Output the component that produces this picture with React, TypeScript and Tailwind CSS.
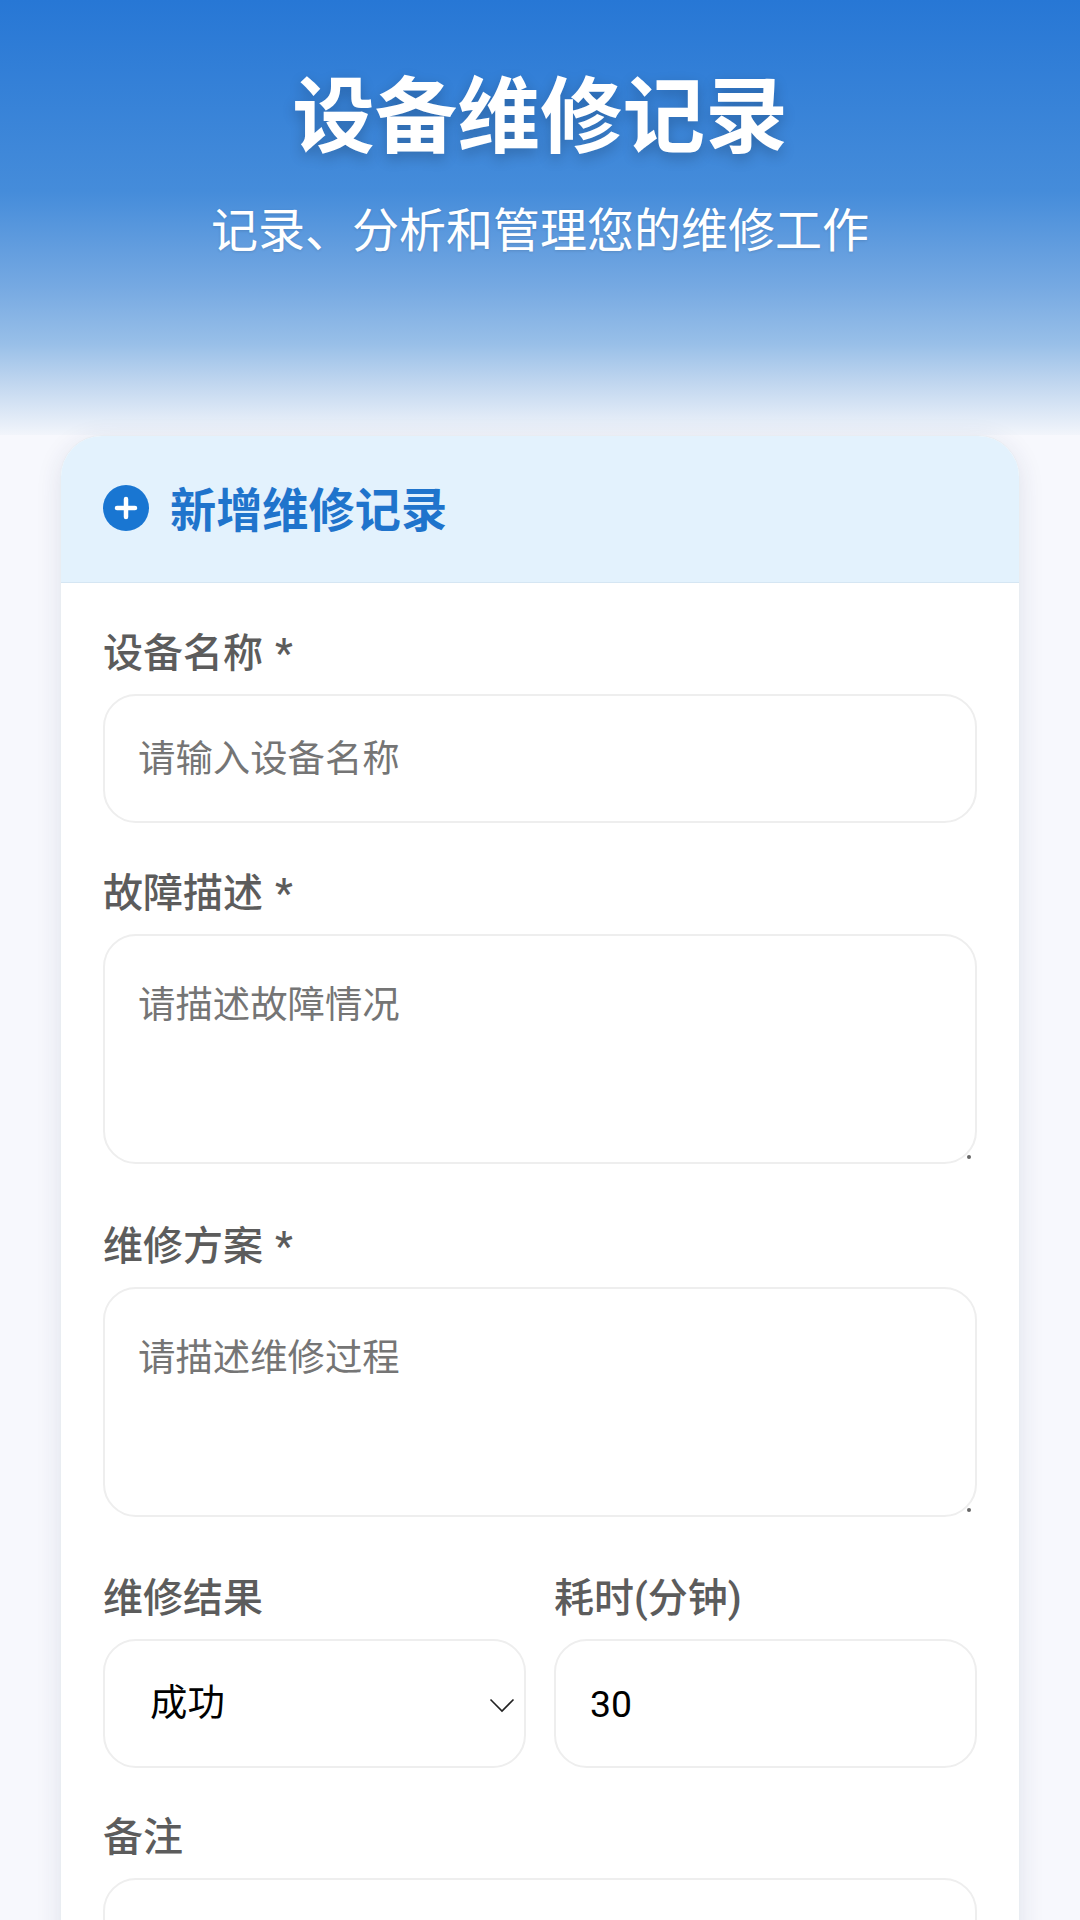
const FONT = "font-['Roboto','Noto_Sans_CJK_SC',sans-serif]";

const Label = ({ children }: { children: string }) => (
  <label className="block h-[52px] mb-[13px] text-[40px] leading-[50px] font-medium text-[#5c5c5c] [word-spacing:2px]">{children}</label>
);

const inputClass =
  'block w-full rounded-[33px] border-2 border-[#eeeeee] bg-white text-[37.4px] text-black outline-none placeholder:text-[#757575]';

const TextArea = ({ placeholder }: { placeholder: string }) => (
  <div className="relative">
    <textarea placeholder={placeholder} className={`${inputClass} h-[230px] resize-none px-[33px] pt-[43px] leading-[52px]`} />
    {/* resize grip */}
    <span className="absolute right-[6px] bottom-[5px] h-[4px] w-[4px] rounded-full bg-[#666666]" />
  </div>
);

export default function App() {
  return (
    <div className={`${FONT} h-[1920px] overflow-hidden bg-[#f7f8fd]`}>
      <header className="h-[435px] pt-[68px] text-center text-white bg-[linear-gradient(180deg,#2777d5_0%,#458cda_44%,#76a9e2_66%,#98bfe8_79%,#c0d6ef_88%,#f2f5fb_100%)]">
        <h1 className="text-[82.6px] leading-[100px] font-bold [text-shadow:0_5px_14px_rgba(0,0,0,0.22)]">设备维修记录</h1>
        <p className="mt-[32px] text-[47px] leading-[62px] [text-shadow:0_1px_3px_rgba(0,0,0,0.12)]">记录、分析和管理您的维修工作</p>
      </header>

      <main className="mx-[60px] rounded-t-[42px] border border-[#e9edf2] bg-white shadow-[0_6px_26px_rgba(40,50,90,0.11)] overflow-hidden">
        <div className="flex h-[147px] items-center gap-[21px] border-b border-[#d5e6f3] bg-[#e3f2fd] px-[42px]">
          <svg width="46" height="46" viewBox="0 0 46 46" className="shrink-0 -mt-[2px]">
            <circle cx="23" cy="23" r="23" fill="#1976d2" />
            <path d="M23 14v18M14 23h18" stroke="#fff" strokeWidth="4.5" strokeLinecap="round" />
          </svg>
          <h2 className="mt-[4px] text-[46.2px] leading-[60px] font-semibold text-[#1f74cc]">新增维修记录</h2>
        </div>

        <form className="h-[1400px] px-[42px] pt-[46px]">
          <div className="mb-[46px]">
            <Label>设备名称 *</Label>
            <input placeholder="请输入设备名称" className={`${inputClass} h-[129px] px-[33px]`} />
          </div>
          <div className="mb-[58px]">
            <Label>故障描述 *</Label>
            <TextArea placeholder="请描述故障情况" />
          </div>
          <div className="mb-[57px]">
            <Label>维修方案 *</Label>
            <TextArea placeholder="请描述维修过程" />
          </div>
          <div className="mb-[45px] grid grid-cols-2 gap-[28px]">
            <div>
              <Label>维修结果</Label>
              <div className="relative">
                <select defaultValue="成功" className={`${inputClass} h-[129px] appearance-none pl-[45px]`}>
                  <option>成功</option>
                  <option>部分成功</option>
                  <option>失败</option>
                </select>
                <svg width="26" height="15" viewBox="0 0 26 15" fill="none" className="absolute right-[11px] top-[59px]">
                  <path d="M1.5 1.5 13 13 24.5 1.5" stroke="#222" strokeWidth="1.6" />
                </svg>
              </div>
            </div>
            <div>
              <Label>耗时(分钟)</Label>
              <input type="number" defaultValue={30} className={`${inputClass} h-[129px] pl-[34px] pr-[33px]`} />
            </div>
          </div>
          <div>
            <Label>备注</Label>
            <textarea className={`${inputClass} h-[230px] resize-none px-[33px] pt-[43px]`} />
          </div>
        </form>
      </main>
    </div>
  );
}
